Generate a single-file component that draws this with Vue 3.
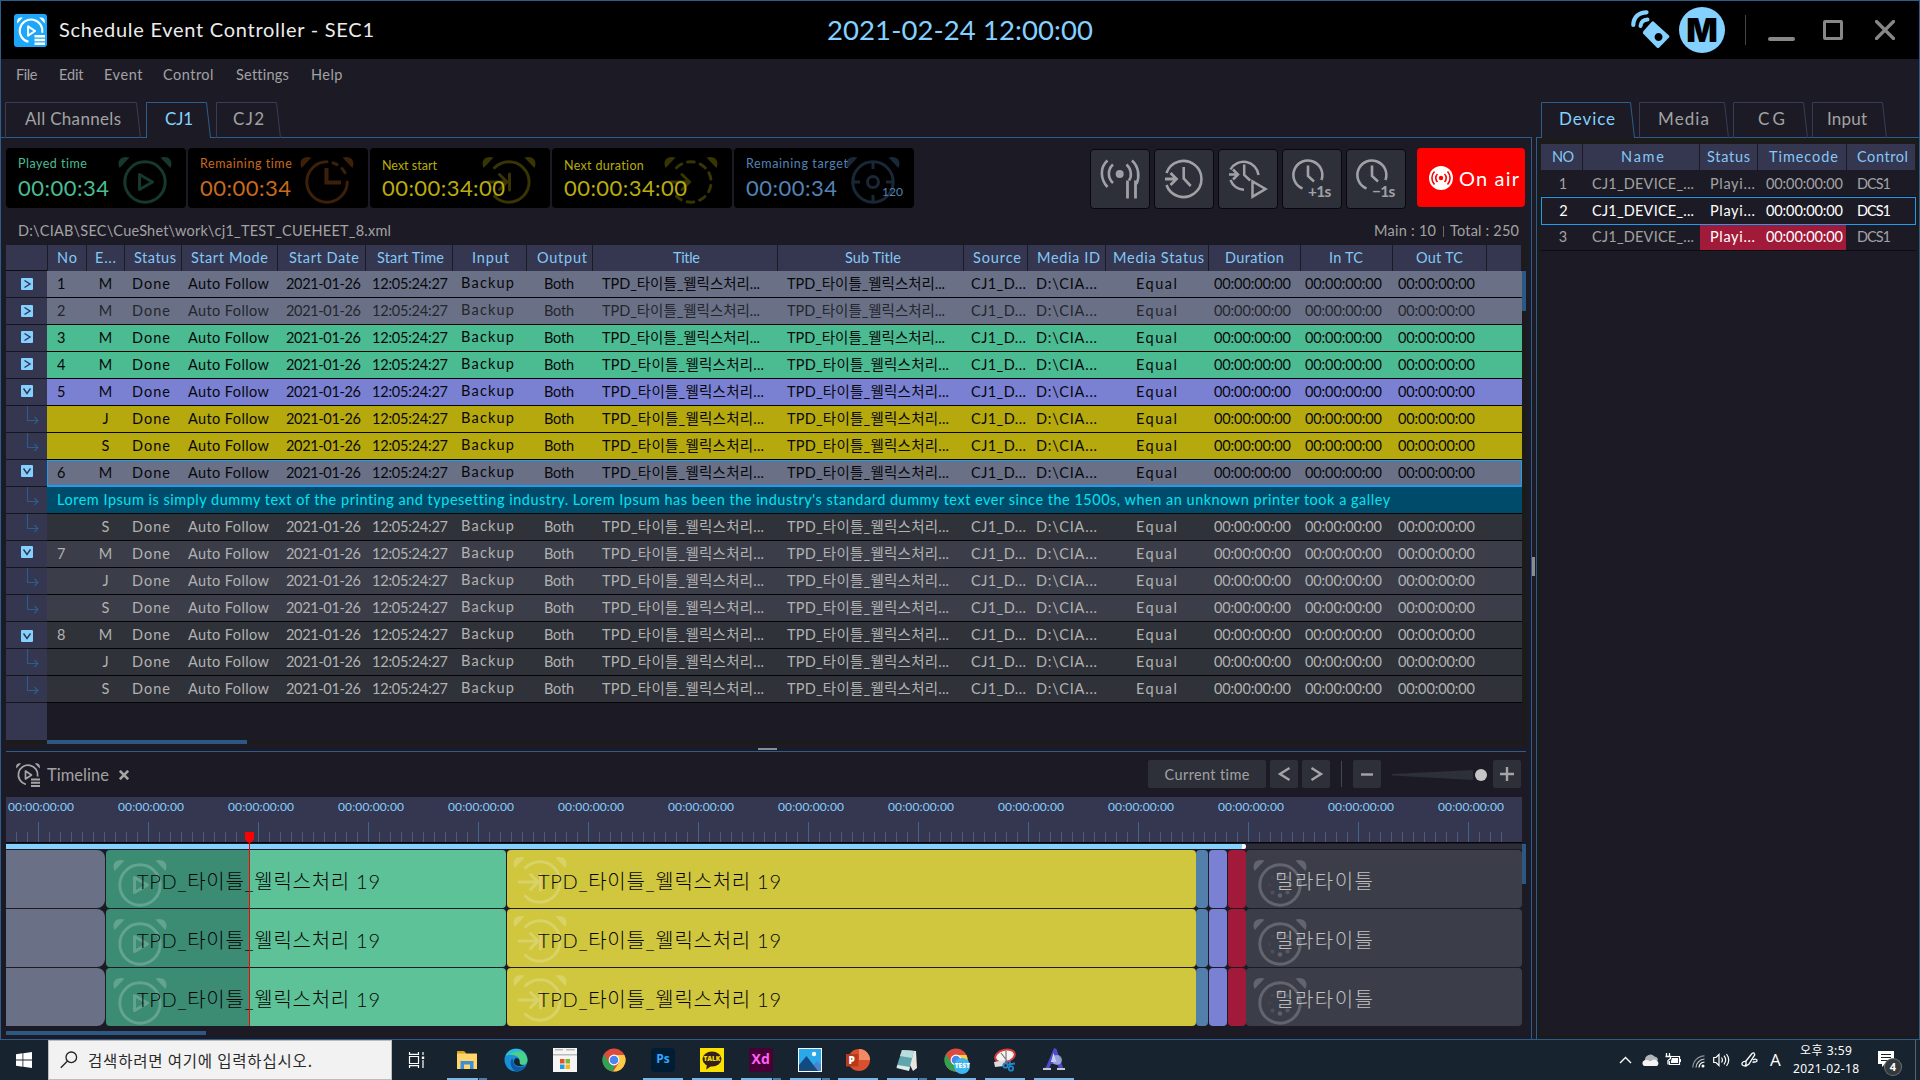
<script setup>
// Spreads a text run over a given width in pixels by adjusting its tracking.
const vFit = {
  mounted(el, binding) {
    if (!binding.value) return
    const count = [...el.textContent].length - 1
    if (count < 1) return
    const gap = (binding.value - el.getBoundingClientRect().width) / count
    el.style.letterSpacing = gap + 'px'
    el.style.marginRight = -gap + 'px'
  }
}

const menus = [
  ['File', 16, 21], ['Edit', 22, 24], ['Event', 21, 38],
  ['Control', 21, 50], ['Settings', 23, 52], ['Help', 23, 31]
]

const channelTabs = [
  { text: 'All Channels', w: 136, fit: 96, pad: 20, gap: 5 },
  { text: 'CJ1', w: 65, fit: 28, pad: 19, gap: 5, active: true },
  { text: 'CJ2', w: 65, fit: 31, pad: 17, gap: 5 }
]
const sideTabs = [
  { text: 'Device', w: 94, fit: 56, pad: 18, gap: 4, active: true },
  { text: 'Media', w: 90, fit: 51, pad: 19, gap: 4 },
  { text: 'CG', w: 75, fit: 27, pad: 25, gap: 4 },
  { text: 'Input', w: 75, fit: 40, pad: 15, gap: 4 }
]
const tabLine = (w) => `M.5 36V.5H${w - 4.5}L${w - 0.5} 36`

const cards = [
  { label: 'Played time', lw: 69, value: '00:00:34', vw: 91, cls: 'green', icon: 'a-play' },
  { label: 'Remaining time', lw: 92, value: '00:00:34', vw: 91, cls: 'orange', icon: 'a-clock' },
  { label: 'Next start', lw: 55, value: '00:00:34:00', vw: 123, cls: 'yellow low', icon: 'a-start' },
  { label: 'Next duration', lw: 80, value: '00:00:34:00', vw: 123, cls: 'yellow low', icon: 'a-dash' },
  { label: 'Remaining target', lw: 102, value: '00:00:34', vw: 91, cls: 'blue', icon: 'a-target', extra: '120' }
]

const tools = ['t-pause', 't-clock', 't-play', 't-plus', 't-minus']

// width, header offset / length, cell offset / length
const columns = [
  { h: 'No', w: 39, hx: 9, hw: 20, dx: 10, dw: 0 },
  { h: 'E...', w: 38, hx: 8, hw: 21, dx: 1, dw: 0, mid: true },
  { h: 'Status', w: 57, hx: 9, hw: 42, dx: 8, dw: 38 },
  { h: 'Start Mode', w: 96, hx: 9, hw: 77, dx: 7, dw: 81 },
  { h: 'Start Date', w: 88, hx: 11, hw: 70, dx: 9, dw: 75 },
  { h: 'Start Time', w: 87, hx: 11, hw: 67, dx: 7, dw: 76 },
  { h: 'Input', w: 74, hx: 19, hw: 37, dx: 9, dw: 53, raise: true },
  { h: 'Output', w: 66, hx: 10, hw: 50, dx: 18, dw: 30 },
  { h: 'Title', w: 185, hx: 80, hw: 27, dx: 10, dw: 158 },
  { h: 'Sub Title', w: 186, hx: 67, hw: 56, dx: 10, dw: 158 },
  { h: 'Source', w: 64, hx: 9, hw: 48, dx: 8, dw: 55 },
  { h: 'Media ID', w: 78, hx: 9, hw: 63, dx: 9, dw: 61 },
  { h: 'Media Status', w: 103, hx: 7, hw: 91, dx: 31, dw: 41 },
  { h: 'Duration', w: 92, hx: 16, hw: 59, dx: 6, dw: 77 },
  { h: 'In TC', w: 92, hx: 28, hw: 34, dx: 5, dw: 77 },
  { h: 'Out TC', w: 94, hx: 23, hw: 47, dx: 6, dw: 77 },
  { h: '', w: 35, hx: 0, hw: 0, dx: 0, dw: 0 }
]
const grid = columns.map((c) => c.w + 'px').join(' ')

const rest = ['Done', 'Auto Follow', '2021-01-26', '12:05:24:27', 'Backup', 'Both',
  'TPD_타이틀_웰릭스처리...', 'TPD_타이틀_웰릭스처리...', 'CJ1_D...', 'D:\\CIA...', 'Equal',
  '00:00:00:00', '00:00:00:00', '00:00:00:00', '']

const events = [
  ['1', 'M', 'slate', 'right', 0], ['2', 'M', 'slate dim', 'right', 0],
  ['3', 'M', 'mint', 'right', -1], ['4', 'M', 'mint', 'right', -1],
  ['5', 'M', 'violet', 'down', -1], ['', 'J', 'olive', 'sub', 0],
  ['', 'S', 'olive', 'sub', 0], ['6', 'M', 'slate selected', 'down', -2],
  ['note', '', 'note', 'sub', 0], ['', 'S', 'dark', 'sub', 0],
  ['7', 'M', 'mid', 'down', -2], ['', 'J', 'mid', 'sub', 0],
  ['', 'S', 'mid', 'sub', 0], ['8', 'M', 'dark', 'down', 1],
  ['', 'J', 'dark', 'sub', 0], ['', 'S', 'dark', 'sub', 0]
].map(([no, type, cls, mark, shift]) => ({ no, type, cls, mark, shift, cells: [no, type, ...rest] }))

const cellFit = (row, ci) => (columns[ci].dw === 158 && row > 2 ? 162 : columns[ci].dw)

const note = "Lorem Ipsum is simply dummy text of the printing and typesetting industry. Lorem Ipsum has been the industry's standard dummy text ever since the 1500s, when an unknown printer took a galley"

const devHead = [['NO', 11, 22], ['Name', 38, 43], ['Status', 7, 43], ['Timecode', 11, 69], ['Control', 10, 51]]
const devices = [
  { no: '1', cls: '' }, { no: '2', cls: 'current' }, { no: '3', cls: 'alert' }
]

const labels = Array.from({ length: 14 }, (_, k) => k)
const ticks = Array.from({ length: 136 }, (_, i) => ({ x: 10.5 + 11 * i, big: i % 10 === 2 }))

const clips = [
  { w: 99, cls: 'c-slate' },
  { w: 400, cls: 'c-green', icon: 'a-play', text: 'TPD_타이틀_웰릭스처리 19', tx: 31, tw: 243 },
  { w: 689, cls: 'c-yellow', icon: 'a-start', text: 'TPD_타이틀_웰릭스처리 19', tx: 31, tw: 243 },
  { w: 12, cls: 'c-blue' },
  { w: 18, cls: 'c-violet' },
  { w: 18, cls: 'c-red' },
  { w: 276, cls: 'c-dark', icon: 'a-dots', text: '밀라타이틀', tx: 29, tw: 98 }
]
</script>

<template>
  <svg class="defs">
    <symbol id="a-bells" viewBox="0 0 54 48"><path fill="currentColor" d="M1.6 12C-2 4.500 4 -1 11.500 1.600ZM52.400 12C56 4.500 50 -1 42.500 1.600Z" /></symbol>
    <symbol id="a-play" viewBox="0 0 54 48"><use href="#a-bells" /><g fill="none" stroke="currentColor" stroke-width="3"><circle cx="27" cy="26" r="20.200" /><path stroke-linejoin="round" d="M21.500 18.500v15L34.500 26z" /></g></symbol>
    <symbol id="a-clock" viewBox="0 0 54 48"><use href="#a-bells" /><g fill="none" stroke="currentColor" stroke-width="3" stroke-linecap="round"><path d="M27 5.800A20.200 20.200 0 1 0 47.200 26M33 6.800l4 1.700M42 12.500l3 4.200M46.800 21.500" /><path stroke-width="4" stroke-linecap="butt" d="M26.500 12v14.500H41" /></g></symbol>
    <symbol id="a-start" viewBox="0 0 54 48"><use href="#a-bells" /><g fill="none" stroke="currentColor" stroke-width="3" stroke-linecap="round"><path d="M12.500 11.800A20.200 20.200 0 1 1 12.500 40.200M6 26h18M17.500 18.500L25 26l-7.500 7.500M27.500 18v16" /></g></symbol>
    <symbol id="a-dash" viewBox="0 0 54 48"><use href="#a-bells" /><g fill="none" stroke="currentColor" stroke-width="3" stroke-linecap="round"><path stroke-dasharray="6.500 6.190" d="M12.500 11.800A20.200 20.200 0 1 1 12.500 40.200" /><path d="M6 26h19M18 18.500L25.500 26 18 33.500" /></g></symbol>
    <symbol id="a-target" viewBox="0 0 54 48"><use href="#a-bells" /><g fill="none" stroke="currentColor" stroke-width="3"><circle cx="27" cy="26" r="20.200" /><circle cx="27" cy="26" r="5.500" /><path d="M27 6v7M27 39v7M7 26h7M40 26h7" /></g></symbol>
    <symbol id="a-dots" viewBox="0 0 54 48"><use href="#a-bells" /><circle cx="27" cy="26" r="20.200" fill="none" stroke="currentColor" stroke-width="3" /><g fill="currentColor"><circle cx="27" cy="15.500" r="2.200" /><circle cx="27" cy="36.500" r="2.200" opacity=".9" /><circle cx="34" cy="18.500" r="2" opacity=".6" /><circle cx="34.500" cy="33.500" r="2.100" opacity=".7" /><circle cx="37.500" cy="26" r="2" opacity=".6" /><circle cx="19.500" cy="33.500" r="2" opacity=".5" /><circle cx="16.500" cy="26" r="1.800" opacity=".2" /><circle cx="19.500" cy="18.500" r="1.800" opacity=".2" /></g></symbol>
    <symbol id="logo" viewBox="0 0 24 24"><path fill="currentColor" d="M.3 5.500C-.5 1.500 1.500-.2 5 .5zM23.700 5.500C24.500 1.500 22.500-.2 19 .5z" /><g fill="none" stroke="currentColor"><path stroke-width="1.800" d="M9.800 21.300A9.700 9.700 0 1 1 21.600 13.500" /><path stroke-width="1.700" stroke-linejoin="round" d="M9.500 8v8l6-4z" /></g><path fill="currentColor" d="M15 15.500h9v2h-9zM15 18.700h9v2h-9zM15 21.900h9v2h-9z" /></symbol>
    <symbol id="t-pause" viewBox="0 0 60 60"><g fill="none" stroke="currentColor" stroke-width="2.600"><path d="M17.500 11.500C10 18 10 30 17.500 38M23 15.500C17.500 20.500 17.500 29 23 34M42 11.500C48.500 17.500 50 27 46.500 35M36.500 15.500C41.500 20 42 27.500 39 31.500" /><path stroke-width="2.800" d="M37.500 31.500v18M45.500 31.500v18" /></g><circle cx="29.700" cy="25" r="4" fill="currentColor" /></symbol>
    <symbol id="t-clock" viewBox="0 0 60 60"><g fill="none" stroke="currentColor" stroke-width="2.600"><path d="M12.500 24A18 18 0 1 1 12.500 36M29.700 18v11.500l7 7.500" /><path stroke-width="2.800" d="M11 30h11M16.500 24l6 6-6 6" /></g></symbol>
    <symbol id="t-play" viewBox="0 0 60 60"><g fill="none" stroke="currentColor" stroke-width="2.500"><path d="M12.500 20.500A15 15 0 0 1 40.500 26M12.500 31A15 15 0 0 0 26 40.800M26.200 15.500V26l6 5.500" /><path d="M11 25.500h8.500M15 20.500l5 5-5 5" /><path d="M34.500 32.500v15.200L47.500 40z" /></g></symbol>
    <symbol id="t-near" viewBox="0 0 60 60"><g fill="none" stroke="currentColor" stroke-width="2.600"><path d="M20.500 39.500A14.500 14.500 0 1 1 39.500 31M26 16.500v10.500l6 5.500" /></g></symbol>
    <symbol id="air" viewBox="0 0 24 24"><circle cx="12" cy="12" r="12" fill="#fff" /><circle cx="12" cy="12" r="2.200" fill="#f00" /><path fill="none" stroke="#f00" stroke-width="1.600" d="M8.500 8a5.500 5.500 0 0 0 0 8M15.500 8a5.500 5.500 0 0 1 0 8M5.500 5.500a9.500 9.500 0 0 0 0 13M18.500 5.500a9.500 9.500 0 0 1 0 13" /></symbol>
    <symbol id="chrome" viewBox="0 0 24 24"><circle cx="12" cy="12" r="11.500" fill="#dd4b3e" /><path fill="#30a353" d="M2 6.200L7.500 15.500 12 17.500 11.500 23.500A11.500 11.500 0 0 1 2 6.200z" /><path fill="#fbcb44" d="M12 7h10.400A11.500 11.500 0 0 1 11.200 23.500L17 14.500z" /><circle cx="12" cy="12" r="5.400" fill="#fff" /><circle cx="12" cy="12" r="4.300" fill="#4a86ee" /></symbol>
  </svg>

  <div class="screen">
    <div class="window">
      <header class="titlebar">
        <div class="logo"><svg width="28" height="28"><use href="#logo" /></svg></div>
        <h1><span v-fit="315" class="t">Schedule Event Controller - SEC1</span></h1>
        <div class="clock"><span v-fit="266" class="t">2021-02-24 12:00:00</span></div>
        <div class="winctl">
          <svg class="remote" width="40" height="40" viewBox="0 0 40 40">
            <path fill="none" stroke="#84d0ff" stroke-width="4.200" stroke-linecap="round" d="M2.300 15C2.500 7 8 2.300 15.500 2.300" />
            <path fill="none" stroke="#84d0ff" stroke-width="4" stroke-linecap="round" d="M9.500 16C10 12 12.500 9.700 16.500 9.500" />
            <path fill="#84d0ff" fill-rule="evenodd" d="M22.500 11.500L38 25.500Q39 26.500 38 27.500L28 37.700Q27 38.500 26 37.700L12 23.500Q11.500 22 12.500 21L21 11.600Q22 11 22.500 11.500zM27.500 23a4 4 0 1 0 .1 0z" />
          </svg>
          <div class="mode">M</div>
          <i class="vsep"></i>
          <i class="min"></i>
          <i class="max"></i>
          <svg class="close" width="20" height="20" viewBox="0 0 20 20"><path stroke="#878787" stroke-width="3.200" stroke-linecap="round" d="M1.500 1.500l17 17M18.500 1.500l-17 17" /></svg>
        </div>
      </header>

      <nav class="menubar">
        <span v-for="m in menus" :key="m[0]" class="menu" :style="{ marginLeft: (m[1] - (m[0] === 'File' ? 1 : 0)) + 'px', width: m[2] + 'px' }"><span v-fit="m[2] + 0.5" class="t">{{ m[0] }}</span></span>
      </nav>

      <div class="body">
        <section class="left">
          <div class="tabs">
            <div v-for="t in channelTabs" :key="t.text" class="tab" :class="{ active: t.active }" :style="{ width: t.w + 'px', paddingLeft: t.pad + 'px' }">
              <svg class="tab-shape" :width="t.w" height="36"><path :d="tabLine(t.w)" /></svg>
              <span v-fit="t.fit" class="t">{{ t.text }}</span>
            </div>
          </div>
          <div class="pane">
            <div class="status">
              <div v-for="c in cards" :key="c.label" class="card" :class="c.cls">
                <svg class="card-icon" width="54" height="48"><use :href="'#' + c.icon" /></svg>
                <div class="card-label"><span v-fit="c.lw" class="t">{{ c.label }}</span></div>
                <div class="card-value"><span v-fit="c.vw" class="t">{{ c.value }}</span></div>
                <span v-if="c.extra" class="extra">{{ c.extra }}</span>
              </div>
              <div class="tools">
                <button v-for="t in tools" :key="t" class="tool">
                  <svg width="60" height="60"><use :href="t === 't-plus' || t === 't-minus' ? '#t-near' : '#' + t" /></svg>
                  <b v-if="t === 't-plus'">+1s</b><b v-if="t === 't-minus'">−1s</b>
                </button>
                <button class="onair"><svg width="24" height="24"><use href="#air" /></svg><span v-fit="60" class="t">On air</span></button>
              </div>
            </div>

            <div class="pathline">
              <span v-fit="373" class="t">D:\CIAB\SEC\CueShet\work\cj1_TEST_CUEHEET_8.xml</span>
              <span class="totals"><span v-fit="62" class="t">Main : 10</span><i></i><span v-fit="69" class="t">Total : 250</span></span>
            </div>

            <div class="table">
              <div class="gutter">
                <div class="gh"></div>
                <div v-for="(e, i) in events" :key="i" class="gc">
                  <span v-if="e.mark !== 'sub'" class="toggle" :style="{ marginTop: e.shift * 2 + 'px' }">
                    <svg width="12" height="12" viewBox="0 0 12 12"><path fill="none" stroke="#33344e" stroke-width="1.400" :d="e.mark === 'right' ? 'M3.500 2.500L9 6 3.500 9.500' : 'M2.500 3.500L6 8.500 9.500 3.500'" /></svg>
                  </span>
                  <svg v-else class="branch" width="14" height="20" viewBox="0 0 14 20"><path fill="none" stroke="#2c5d8c" stroke-width="1.200" d="M1.500 0v14.500H12M8.500 11l3.500 3.500L8.500 18" /></svg>
                </div>
                <div class="gfill"></div>
              </div>
              <div class="rows">
                <div class="thead" :style="{ gridTemplateColumns: grid }">
                  <div v-for="(c, ci) in columns" :key="ci" class="th" :style="{ paddingLeft: c.hx + 'px' }"><span v-fit="c.hw" class="t">{{ c.h }}</span></div>
                </div>
                <template v-for="(e, i) in events" :key="i">
                  <div v-if="e.no === 'note'" class="tr note"><span v-fit="1333" class="t">{{ note }}</span></div>
                  <div v-else class="tr" :class="e.cls" :style="{ gridTemplateColumns: grid }">
                    <div v-for="(c, ci) in columns" :key="ci" class="td" :class="{ mid: c.mid, raise: c.raise }" :style="{ paddingLeft: c.dx + 'px' }"><span v-fit="cellFit(i, ci)" class="t">{{ e.cells[ci] }}</span></div>
                  </div>
                </template>
              </div>
              <div class="vtrack"><i></i></div>
            </div>
            <div class="htrack"><i></i></div>
            <div class="grip"><i></i></div>

            <div class="timeline">
              <div class="tl-head">
                <svg class="tl-icon" width="24" height="24"><use href="#logo" /></svg>
                <span v-fit="62" class="t tl-title">Timeline</span>
                <svg class="tl-x" width="10" height="10" viewBox="0 0 10 10"><path stroke="#a5a5a5" stroke-width="2.600" d="M.8.8l8.400 8.400M9.200.8L.8 9.200" /></svg>
                <div class="tl-tools">
                  <button class="now"><span v-fit="85" class="t">Current time</span></button>
                  <button class="sq"><svg width="28" height="28"><path d="M19.500 8L10 14l9.500 6" /></svg></button>
                  <button class="sq"><svg width="28" height="28"><path d="M9.500 8l9.500 6-9.500 6" /></svg></button>
                  <i class="vsep2"></i>
                  <button class="sq"><svg width="28" height="28"><path d="M8 14.500h12" /></svg></button>
                  <svg class="zoom" width="100" height="16"><path fill="#2d3038" d="M5 7L86 3v10L5 8.500z" /><circle cx="94" cy="8" r="6" fill="#c6c6c6" /></svg>
                  <button class="sq"><svg width="28" height="28"><path d="M7 14h14M14 7v14" /></svg></button>
                </div>
              </div>

              <div class="tl-body">
                <div class="tl-main">
                  <div class="ruler">
                    <div class="rl">
                      <span v-for="k in labels" :key="k" class="rlabel"><span v-fit="66" class="t">00:00:00:00</span></span>
                    </div>
                    <svg width="1516" height="20" class="ticks"><path v-for="t in ticks" :key="t.x" :class="{ big: t.big }" :d="`M${t.x} ${t.big ? 0 : 10}V20`" /></svg>
                  </div>
                  <div class="progress"><i></i><b></b></div>
                  <div v-for="n in 3" :key="n" class="track">
                    <div v-for="(c, i) in clips" :key="i" class="clip" :class="c.cls" :style="{ width: c.w + 'px', paddingLeft: (c.tx || 0) + 'px' }">
                      <svg v-if="c.icon" class="clip-icon" width="54" height="48"><use :href="'#' + c.icon" /></svg>
                      <span v-if="c.text" v-fit="c.tw" class="t">{{ c.text }}</span>
                    </div>
                  </div>
                  <div class="playhead"><svg width="10" height="11"><path fill="#f00" d="M0 0h9v7L6 10.500H3L0 7z" /></svg></div>
                </div>
                <div class="tl-v"><i></i></div>
              </div>
              <div class="tl-h"></div>
            </div>
          </div>
        </section>

        <div class="splitter"><i></i></div>

        <section class="right">
          <div class="tabs">
            <div v-for="t in sideTabs" :key="t.text" class="tab" :class="{ active: t.active }" :style="{ width: t.w + 'px', paddingLeft: t.pad + 'px', marginRight: t.gap + 'px' }">
              <svg class="tab-shape" :width="t.w" height="36"><path :d="tabLine(t.w)" /></svg>
              <span v-fit="t.fit" class="t">{{ t.text }}</span>
            </div>
          </div>
          <div class="rpane">
            <div class="rinner">
              <div class="dev dhead"><div v-for="d in devHead" :key="d[0]" class="th" :style="{ paddingLeft: d[1] + 'px' }"><span v-fit="d[2]" class="t">{{ d[0] }}</span></div></div>
              <div v-for="d in devices" :key="d.no" class="dev drow" :class="d.cls">
                <div class="dno">{{ d.no }}</div>
                <div class="dname"><span v-fit="102" class="t">CJ1_DEVICE_...</span></div>
                <div class="dstat"><span v-fit="45" class="t">Playi...</span></div>
                <div class="dtime"><span v-fit="77" class="t">00:00:00:00</span></div>
                <div class="dctl"><span v-fit="34" class="t">DCS1</span></div>
              </div>
            </div>
          </div>
        </section>
      </div>
    </div>

    <footer class="taskbar">
      <div class="start"><svg width="16" height="16" viewBox="0 0 16 16"><path fill="#fff" d="M0 2.200L6.500 1.300V7.600H0zM7.300 1.200L16 0V7.600H7.300zM0 8.400H6.500V14.700L0 13.800zM7.300 8.400H16V16L7.300 14.800z" /></svg></div>
      <div class="search">
        <svg width="18" height="18" viewBox="0 0 18 18"><g fill="none" stroke="#222" stroke-width="1.300"><circle cx="11.300" cy="6.300" r="5.300" /><path d="M7.500 10L.8 16.700" /></g></svg>
        <span v-fit="224" class="t">검색하려면 여기에 입력하십시오.</span>
      </div>
      <div class="app view"><svg width="18" height="18" viewBox="0 0 18 18"><g fill="none" stroke="#fff" stroke-width="1.200"><path d="M1.500 5.500h9v7h-9zM1.500 1v2.300h9V1M1.500 17v-2.300h9V17M15 1v3M15 9v8" /><path stroke-width="2.400" d="M15 5.500v2.500" /></g></svg></div>
      <div class="app on more"><svg width="24" height="24" viewBox="0 0 24 24"><path fill="#dfa01a" d="M2 3h7l2 2v3H2z" /><path fill="#ffd667" d="M2 5.500h20V21H2z" /><path fill="#3f8fd8" d="M5.500 13h13v8H15v-4.500H9V21H5.500z" /></svg></div>
      <div class="app"><svg width="24" height="24" viewBox="0 0 24 24"><circle cx="12" cy="12" r="11.500" fill="#1a8fd8" /><path fill="#49d18a" d="M2 7A11.500 11.500 0 0 1 23.500 12c0 4-3.500 5.500-7 4.500-2-.5-1.500-1.500-.8-2.500C17 10 12 5.500 2 7z" /><path fill="#2fb9dc" d="M1.500 8.500C5 0 15-1 20 4c-5-1.500-12 0-18.500 4.500z" /><path fill="#0c59a4" d="M8 10.500c-3 4-1 11 4.500 13C17 23 21 20 22 17.500c-4 3-12 2-12.500-3.500 0-1.500-.3-2.500-1.500-3.500z" /><path fill="#17222d" d="M12 10c-3 2-2.500 6 .5 7.500 3 1.200 6 .8 8-.2-3 .3-5-.8-4.800-2.500C16 12 14.500 10 12 10z" /></svg></div>
      <div class="app"><svg width="24" height="24" viewBox="0 0 24 24"><path fill="#f5f5f5" d="M0 0h24v24H0z" /><path fill="#bcbcbc" d="M2 1h8v1.500H2zM0 6h24v1.600H0zM13 1h9v1.500h-9z" /><path fill="#e8502a" d="M7 11h4.500v4.500H7z" /><path fill="#7db72f" d="M12.500 11H17v4.500h-4.500z" /><path fill="#1c9fe8" d="M7 16.500h4.500V21H7z" /><path fill="#f9b51b" d="M12.500 16.500H17V21h-4.500z" /></svg></div>
      <div class="app"><svg width="24" height="24"><use href="#chrome" /></svg></div>
      <div class="app on"><span class="ico ps">Ps</span></div>
      <div class="app on"><span class="ico talk"><svg width="24" height="24" viewBox="0 0 24 24"><ellipse cx="12" cy="11" rx="9.500" ry="7.500" fill="#35201f" /><path fill="#35201f" d="M7 16l-.8 5.500L12 17.500z" /></svg><b>TALK</b></span></div>
      <div class="app on more"><span class="ico xd">Xd</span></div>
      <div class="app on more"><svg width="24" height="24" viewBox="0 0 24 24"><path fill="#fff" d="M0 0h24v24H0z" /><path fill="#29a9ea" d="M1 1h22v22H1z" /><path fill="#4a83cf" d="M10 23l9-10 4 4v6z" /><path fill="#134a80" d="M1 17L8.500 8 20 23H1z" /><circle cx="16" cy="6" r="2.200" fill="#fff" /></svg></div>
      <div class="app on"><span class="ico ppt"><svg width="24" height="24" viewBox="0 0 24 24"><circle cx="13" cy="12" r="11" fill="#d9502e" /><path fill="#f28a66" d="M13 1a11 11 0 0 1 11 11H13z" /><path fill="#b83a1c" d="M0 6h12.500v12.500H0z" /></svg><b>P</b></span></div>
      <div class="app on more"><svg width="24" height="24" viewBox="0 0 24 24"><path fill="#e6e6e0" d="M7 2l14 1 1 17-4 3z" /><path fill="#5fa5ad" d="M7 2l12 1-5 19L1.500 19z" /><path fill="#b9dcdd" d="M7 2l12 1-2 7L5 8z" /><path fill="#dceceb" d="M2.500 17l12.500 2-1 4L1.500 20z" /></svg></div>
      <div class="app on"><span class="ico test"><svg width="24" height="24"><use href="#chrome" /></svg><b>TEST</b></span></div>
      <div class="app on"><svg width="24" height="24" viewBox="0 0 24 24"><ellipse cx="12" cy="8" rx="10" ry="6.200" fill="#f6f3f3" stroke="#d83c3c" stroke-width="2" transform="rotate(-15 12 8)" /><path stroke="#777" stroke-width="1.200" d="M8 5l7 9M13 3v11" /><path fill="#ddd" d="M1 14l11-2-1 6-9 1z" /><g fill="none" stroke="#2187c9" stroke-width="1.800"><circle cx="12.500" cy="17.500" r="2.200" /><circle cx="18" cy="20.500" r="2.200" /><path d="M14.500 16.500l7.500-1M17.500 18.500L16.500 13" /></g></svg></div>
      <div class="app on"><svg width="24" height="24" viewBox="0 0 24 24"><path fill="#4c4cc8" d="M12 0l2.500 1 7 20H17l-1.500-5H9l-2 5H1l3-2z" /><path fill="#dfe0f2" d="M11.500 5l3 9H9z" /><circle cx="15" cy="12" r="5" fill="#b9c3e6" opacity=".7" /><path fill="#c9c9d6" d="M1 20h8v2H1zM15 20h8v2h-8z" /></svg></div>

      <div class="tray">
        <svg width="56" height="24" viewBox="0 0 56 24" class="tr-a"><path fill="none" stroke="#fff" stroke-width="1.400" d="M1 15l5.500-5.500L12 15" /><path fill="#b0b5ba" d="M26 13a5.500 5.500 0 0 1 9.500-4.500 4 4 0 0 1 3.500 4z" /><path fill="#f4f4f4" d="M25.500 18a3 3 0 0 1-.5-5.500c3-1 5 0 6 .5l4-1.500c3-.5 6.500 4 3 6.500z" /></svg>
        <svg width="16" height="14" viewBox="0 0 16 14" class="tr-b"><path fill="none" stroke="#fff" stroke-width="1.200" d="M6 3.500h8.500v8H4.500V8M15.500 6v3" /><path fill="#fff" d="M7 5h6v5H6V8z" /><path fill="none" stroke="#fff" stroke-width="1.300" d="M1.500 0v3M4.500 0v3M.5 3.500h5v2L3 7.500v4" /></svg>
        <svg width="13" height="13" viewBox="0 0 13 13" class="tr-c"><g fill="none" stroke-width="1.200"><path stroke="#8a9299" d="M.8 12.500A12 12 0 0 1 12.500.8" /><path stroke="#c5c9cc" d="M4 12.500A9 9 0 0 1 12.500 4" /><path stroke="#fff" d="M7 12.500A6 6 0 0 1 12.500 7" /></g><circle cx="11" cy="11" r="1.500" fill="#fff" /></svg>
        <svg width="17" height="14" viewBox="0 0 17 14" class="tr-d"><g fill="none" stroke="#fff" stroke-width="1.200"><path d="M.7 4.500H3L6 1.500v11L3 9.500H.7zM8.500 4.500q1.800 2.500 0 5M11 2.700q3.300 4.300 0 8.600M13.500 1q4.500 6 0 12" /></g></svg>
        <svg width="17" height="16" viewBox="0 0 17 16" class="tr-e"><g fill="none" stroke="#fff" stroke-width="1.300"><path d="M5 9L11 1.500Q13 0 13.500 2 14 3 13 4L8 12 5 14zM5 9.500C1 9 0 12 2 13.500c2 1 3-.5 3-2M12 8c3-2 5 0 3.500 1.500-1.500 1-3 0-4 1" /></g></svg>
        <span class="ime">A</span>
        <div class="when"><span v-fit="52" class="t">오후 3:59</span><span v-fit="66" class="t">2021-02-18</span></div>
        <div class="notif"><svg width="16" height="16" viewBox="0 0 16 16"><path fill="#fff" d="M0 0h16v13H7l-3 3v-3H0z" /><path stroke="#17222d" stroke-width="1.200" d="M3 3.500h10M3 6.500h10M3 9.500h7" /></svg><b>4</b></div>
        <i class="peek"></i>
      </div>
    </footer>
  </div>
</template>

<style>
body { margin: 0; background: #1c1b25; }
</style>

<style scoped>
* { box-sizing: border-box; }
.defs { position: absolute; width: 0; height: 0; }
.screen { width: 1920px; height: 1080px; overflow: hidden; background: #1c1b25; color: #a2a2a4; font-family: Lato, "Noto Sans CJK KR", sans-serif; font-size: 14.5px; display: flex; flex-direction: column; }
.t { display: inline-block; white-space: pre; flex: none; }
button { font: inherit; color: inherit; border: 0; padding: 0; margin: 0; }
svg { display: block; flex: none; }

.window { height: 1040px; border: 1px solid #2c5d8c; display: flex; flex-direction: column; }
.titlebar { height: 58px; flex: none; background: #000; display: flex; align-items: center; padding: 0 24px 0 13px; }
.logo { width: 33px; height: 33px; border-radius: 3px; background: #1da7fb; color: #fff; display: flex; align-items: center; justify-content: center; margin-top: 1px; flex: none; }
h1 { margin: -2px 0 0 12px; font-size: 20px; font-weight: 400; color: #ececec; width: 768px; }
.clock { font-size: 27.5px; font-weight: 400; color: #84d0ff; margin-top: -2px; }
.winctl { margin-left: auto; display: flex; align-items: center; }
.mode { width: 46px; height: 46px; border-radius: 50%; background: #84d0ff; color: #000; font: 900 33px/46px Inter, sans-serif; text-align: center; margin-left: 8px; }
.vsep { width: 1px; height: 30px; background: #444; margin-left: 20px; }
.min { width: 27px; height: 4px; border-radius: 2px; background: #878787; margin: 17px 0 0 22px; }
.max { width: 20px; height: 20px; border: 3px solid #878787; border-radius: 2px; margin-left: 28px; }
.close { margin-left: 32px; }

.menubar { height: 43px; flex: none; display: flex; padding-top: 6px; line-height: 20px; }
.menu { display: block; }

.body { flex: 1; display: flex; min-height: 0; }
.left { width: 1531px; display: flex; flex-direction: column; }
.right { width: 383px; display: flex; flex-direction: column; }
.tabs { height: 36px; flex: none; display: flex; padding-left: 4px; position: relative; z-index: 1; }
.left .tab { margin-right: 5px; }
.tab { position: relative; font-size: 17px; line-height: 34px; height: 36px; margin-bottom: -1px; }
.tab .t { position: relative; }
.tab-shape { position: absolute; left: 0; top: 0; fill: none; stroke: #373c58; }
.tab.active { color: #84d0ff; }
.tab.active .tab-shape { fill: #1c1b25; stroke: #2c5d8c; }
.pane { flex: 1; margin-top: -1px; border-top: 1px solid #2c5d8c; border-right: 1px solid #2c5d8c; padding: 10px 5px 0; display: flex; flex-direction: column; min-height: 0; }
.right .tabs { padding-left: 5px; }
.rpane { flex: 1; margin-top: -1px; border: 1px solid #2c5d8c; border-width: 1px 0 0 1px; padding: 6px 3px 4px 4px; background: #1b1b1c; }
.splitter { width: 4px; position: relative; }
.splitter i { position: absolute; left: 0; top: 455px; width: 3px; height: 19px; background: #8a8c94; }

.status { display: flex; height: 62px; flex: none; }
.card { position: relative; width: 180px; height: 60px; border-radius: 4px; background: #000; margin-right: 2px; padding: 9px 0 0 12px; }
.card.low { padding-top: 11px; }
.card-label { position: relative; font-size: 12.5px; line-height: 14px; margin-bottom: 5px; }
.low .card-label { margin-bottom: 3px; }
.card-value { position: relative; font-size: 22px; line-height: 24px; }
.card-icon { position: absolute; left: 112px; top: 8px; opacity: .3; }
.green { color: #4bbc92; }
.orange { color: #c96a1e; }
.yellow { color: #b9ac0e; }
.blue { color: #5383b6; }
.extra { position: absolute; left: 148px; top: 36px; font-size: 12px; line-height: 16px; }
.tools { display: flex; margin-left: auto; margin-right: 1px; padding-top: 1px; gap: 4px; }
.tool { position: relative; width: 60px; height: 60px; background: #2d3038; border-radius: 4px; box-shadow: inset 0 0 0 1px #08080a; color: #a0a1a5; }
.tool b { position: absolute; left: 26px; top: 32px; font: 700 15.500px/20px Lato, sans-serif; letter-spacing: -.8px; }
.onair { width: 108px; height: 59px; margin-left: 7px; margin-top: -1px; border-radius: 4px; background: #f00; color: #fff; font-size: 20px; display: flex; align-items: center; padding-left: 12px; gap: 6px; }

.pathline { height: 35px; flex: none; display: flex; justify-content: space-between; padding: 12px 7px 0 12px; line-height: 18px; }
.totals { display: flex; }
.totals i { width: 1px; height: 11px; background: #6a6a70; margin: 4px 6px 0 7px; }

.table { height: 495px; flex: none; display: flex; }
.gutter { width: 41px; display: flex; flex-direction: column; }
.gh { height: 26px; background: #35364f; border-bottom: 1px solid #0c0c12; }
.gc { height: 27px; background: #35364f; border-bottom: 1px solid #15151d; display: flex; align-items: center; justify-content: center; }
.toggle { width: 12px; height: 12px; border-radius: 1px; background: #84d0ff; }
.branch { margin: -7px 0 0 12px; }
.gfill { flex: 1; background: #35364f; }
.rows { width: 1475px; }
.thead { display: grid; height: 26px; border-bottom: 1px solid #0a0a0e; }
.th { background: #35364f; color: #84c8f8; line-height: 26px; border-left: 1px solid #1c1b25; white-space: nowrap; }
.tr { display: grid; height: 27px; border-bottom: 1px solid #050507; line-height: 26px; color: #08080c; }
.td { white-space: nowrap; }
.td.mid { text-align: center; padding-right: 0; }
.td.raise { line-height: 23px; }
.slate { background: #6a7186; }
.dim { color: #24262e; }
.mint { background: #4bbc92; }
.violet { background: #7a80d2; }
.olive { background: #b6a90d; }
.dark { background: #2f3239; color: #b2b2b2; }
.mid.tr { background: #3b3e49; color: #b2b2b2; }
.selected { box-shadow: inset 0 0 0 1px #1d9cf0; border-bottom-color: #1d9cf0; }
.note { display: block; background: #004a6a; color: #00e4f0; padding-left: 10px; line-height: 25px; }
.vtrack { width: 4px; background: #1b1b1b; padding-top: 26px; }
.vtrack i { display: block; height: 40px; background: #2c5984; }
.htrack { height: 4px; flex: none; background: #1b1b1b; }
.htrack i { display: block; width: 200px; height: 4px; margin-left: 41px; background: #2c5984; }
.grip { height: 7px; flex: none; display: flex; padding: 4px 0 0 752px; }
.grip i { width: 19px; height: 2px; background: #8a8c94; }

.timeline { border-top: 1px solid #2c5d8c; flex: 1; min-height: 0; }
.tl-head { height: 45px; display: flex; align-items: center; }
.tl-icon { color: #a5a5a7; margin: 1px 0 0 10px; }
.tl-title { font-size: 16.5px; margin-left: 7px; line-height: 22px; margin-top: 1px; }
.tl-x { margin: 1px 0 0 10px; }
.tl-tools { margin-left: auto; display: flex; align-items: center; padding-right: 5px; height: 28px; margin-top: -1px; }
.now { width: 118px; height: 28px; background: #2d3038; border-radius: 2px; }
.sq { width: 28px; height: 28px; background: #2d3038; border-radius: 2px; margin-left: 4px; }
.sq path { fill: none; stroke: #a5a5a7; stroke-width: 2.4; }
.vsep2 { width: 1px; height: 26px; background: #44454d; margin: 0 7px 0 11px; }
.zoom { margin: 2px 4px 0 6px; }
.zoom + .sq { margin-left: 2px; }

.tl-body { display: flex; }
.tl-main { width: 1516px; position: relative; }
.ruler { height: 46px; background: #35364f; border-bottom: 1px solid #05050a; overflow: hidden; }
.rl { display: flex; height: 25px; padding-left: 2px; }
.rlabel { width: 110px; flex: none; font-size: 12px; line-height: 19px; color: #84d0ff; }
.ticks path { stroke: #4d5a7c; }
.ticks path.big { stroke: #44648c; }
.progress { height: 7px; display: flex; background: #2d2d37; border: solid #1c1b25; border-width: 1px 0; }
.progress i { width: 1236px; background: #84d0ff; }
.progress b { width: 4px; background: #fff; border-radius: 0 2px 2px 0; }
.track { height: 59px; display: flex; gap: 1px; }
.clip { position: relative; height: 58px; border-radius: 4px; font-size: 20px; line-height: 62px; white-space: nowrap; color: #050505; flex: none; font-weight: 300; }
.clip .t { position: relative; }
.clip-icon { position: absolute; left: 7px; top: 9px; color: #fff; opacity: .2; }
.c-slate { background: #6a7186; border-radius: 0 8px 8px 0; }
.c-green { background: linear-gradient(90deg, #3c8c74 143px, #5ec298 143px); }
.c-yellow { background: #d0c73f; }
.c-yellow .clip-icon { left: 6px; top: 6px; }
.c-blue { background: #5380ab; margin-left: -1px; }
.c-violet { background: #7a80d2; }
.c-red { background: #a21a39; }
.c-dark { background: #3b3e49; color: #c0c0c0; margin-left: -1px; }
.playhead { position: absolute; left: 239px; top: 35px; height: 194px; width: 9px; background: linear-gradient(#f00, #f00) 4px 0 / 1px 100% no-repeat; }
.tl-v { width: 4px; padding-top: 47px; }
.tl-v i { display: block; height: 40px; background: #2c5984; }
.tl-h { width: 200px; height: 4px; background: #2c5984; margin-top: 4px; }

.dev { display: grid; grid-template-columns: 41px 117px 58px 89px 69px; }
.rinner { background: #1c1b25; height: 100%; }
.dhead { height: 26px; }
.dhead .th:first-child { border-left: 0; }
.drow { height: 27px; line-height: 28px; border-bottom: 1px solid #0c0c12; }
.dno { text-align: center; padding-right: 0; padding-left: 3px; }
.dname { padding-left: 10px; }
.dstat { padding-left: 11px; }
.dtime { padding-left: 9px; }
.dctl { padding-left: 11px; }
.current { color: #fff; height: 28px; border: 1px solid #1d9cf0; grid-template-columns: 40px 117px 58px 89px 68px; line-height: 25px; }
.alert { height: 26px; line-height: 24px; }
.alert .dstat, .alert .dtime { background: #a21a39; color: #fff; }
.alert .dstat { margin-left: 1px; padding-left: 10px; }

.taskbar { height: 40px; background: #17232e; display: flex; }
.start { width: 48px; display: flex; align-items: center; justify-content: center; }
.search { width: 344px; background: #f2f2f2; border: 1px solid #bcbcbc; display: flex; align-items: center; padding-left: 11px; gap: 10px; color: #2a2a2a; font: 15.5px/38px "Noto Sans CJK KR", sans-serif; margin-right: 3px; }
.app { width: 40px; height: 40px; margin-right: 9px; display: flex; align-items: center; justify-content: center; position: relative; flex: none; }
.app.view { margin-right: 12px; padding-left: 3px; }
.app:nth-child(n + 7) { margin-right: 8.9px; }
.app.on { box-shadow: inset 0 -2px 0 #76b9ed; }
.app.more { background: linear-gradient(#4b7da6, #4b7da6) 32px 38px / 8px 2px no-repeat; box-shadow: none; }
.app.more::after { content: ""; position: absolute; left: 0; bottom: 0; width: 31px; height: 2px; background: #76b9ed; }
.ico { position: relative; width: 24px; height: 24px; font: 700 12px/22px "Open Sans", sans-serif; text-align: center; border-radius: 4px; flex: none; }
.ps { background: #001d34; color: #31a8ff; }
.xd { background: #470137; color: #ff61f6; border-radius: 2px; font-size: 14px; }
.talk { background: #fae100; border-radius: 0; }
.talk b { position: absolute; left: 0; top: 0; width: 24px; font-size: 6.5px; line-height: 22px; color: #fae100; }
.ppt b { position: absolute; left: 2px; top: 1px; color: #fff; font-size: 10px; }
.test b { position: absolute; left: 10px; top: 10px; width: 16px; height: 16px; border-radius: 50%; background: #3db7f0; color: #fff; font-size: 6.5px; line-height: 16px; }
.tray { margin-left: auto; width: 301px; display: flex; align-items: center; position: relative; }
.tr-b { margin-left: -10px; }
.tr-a { width: 56px; }
.tr-c { margin: 3px 0 0 11px; }
.tr-d { margin-left: 8px; }
.tr-e { margin-left: 11px; }
.ime { color: #fff; font: 17px/40px "Open Sans", sans-serif; margin-left: 12px; width: 12px; }
.when { width: 66px; margin-left: 11px; font: 12px/18px "Noto Sans", "Noto Sans CJK KR", sans-serif; color: #fff; display: flex; flex-direction: column; align-items: center; }
.notif { position: relative; margin-left: 19px; margin-top: -2px; }
.notif b { position: absolute; left: 7px; top: 8px; width: 16px; height: 16px; border-radius: 50%; background: #33383d; box-shadow: 0 0 0 1px #6c7176; color: #fff; font: 700 11px/16px "Noto Sans", sans-serif; text-align: center; }
.peek { position: absolute; right: 4px; top: 0; width: 1px; height: 40px; background: #59636c; }
</style>
